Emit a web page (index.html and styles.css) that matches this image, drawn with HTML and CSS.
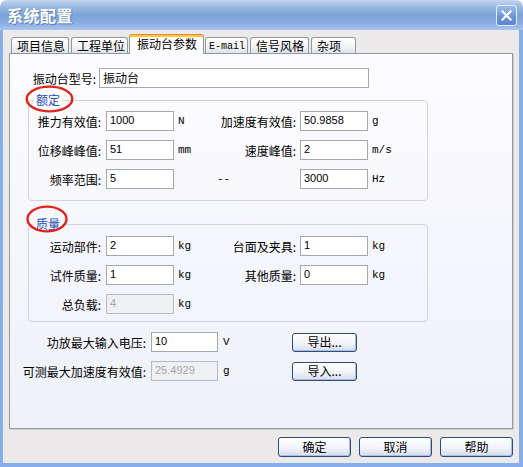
FILE: index.html
```html
<!DOCTYPE html>
<html lang="zh-CN">
<head>
    <meta charset="UTF-8">
    <title>系统配置</title>
    <link rel="stylesheet" href="styles.css">
</head>
<body>
    <div class="window">
        <div class="titlebar">
            <span class="title">系统配置</span>
            <span class="close-btn">
                <svg width="11" height="11" viewBox="0 0 11 11"><path d="M1.5 1.5L9.5 9.5M9.5 1.5L1.5 9.5" stroke="#fff" stroke-width="2.2" stroke-linecap="square"/></svg>
            </span>
        </div>
        <div class="dialog">
            <div class="tabs">
                <div class="tab">项目信息</div>
                <div class="tab">工程单位</div>
                <div class="tab active">振动台参数</div>
                <div class="tab mono">E-mail</div>
                <div class="tab">信号风格</div>
                <div class="tab">杂项</div>
            </div>
            <div class="panel">
                <div class="model-row">
                    <label class="model-label">振动台型号:</label>
                    <input class="field model-field" value="振动台">
                </div>

                <fieldset class="group group-rated">
                    <legend>额定<svg class="mark" width="49" height="28" viewBox="0 0 49 28"><ellipse cx="24.5" cy="14" rx="22.8" ry="12.4" fill="none" stroke="#e3231b" stroke-width="2.4"/></svg></legend>
                    <div class="grid">
                        <label class="lbl">推力有效值:</label>
                        <input class="field" value="1000">
                        <span class="unit">N</span>
                        <label class="lbl lbl2">加速度有效值:</label>
                        <input class="field" value="50.9858">
                        <span class="unit">g</span>

                        <label class="lbl">位移峰峰值:</label>
                        <input class="field" value="51">
                        <span class="unit">mm</span>
                        <label class="lbl lbl2">速度峰值:</label>
                        <input class="field" value="2">
                        <span class="unit">m/s</span>

                        <label class="lbl">频率范围:</label>
                        <input class="field" value="5">
                        <span class="unit"></span>
                        <span class="dash">--</span>
                        <input class="field" value="3000">
                        <span class="unit">Hz</span>
                    </div>
                </fieldset>

                <fieldset class="group group-mass">
                    <legend>质量<svg class="mark" width="42" height="28" viewBox="0 0 42 28"><ellipse cx="21" cy="14" rx="19.5" ry="12.4" fill="none" stroke="#e3231b" stroke-width="2.4"/></svg></legend>
                    <div class="grid">
                        <label class="lbl">运动部件:</label>
                        <input class="field" value="2">
                        <span class="unit">kg</span>
                        <label class="lbl lbl2">台面及夹具:</label>
                        <input class="field" value="1">
                        <span class="unit">kg</span>

                        <label class="lbl">试件质量:</label>
                        <input class="field" value="1">
                        <span class="unit">kg</span>
                        <label class="lbl lbl2">其他质量:</label>
                        <input class="field" value="0">
                        <span class="unit">kg</span>

                        <label class="lbl">总负载:</label>
                        <input class="field" value="4" disabled>
                        <span class="unit">kg</span>
                    </div>
                </fieldset>

                <div class="extra">
                    <label class="lbl">功放最大输入电压:</label>
                    <input class="field" value="10">
                    <span class="unit">V</span>
                    <button class="btn small">导出...</button>

                    <label class="lbl">可测最大加速度有效值:</label>
                    <input class="field" value="25.4929" disabled>
                    <span class="unit">g</span>
                    <button class="btn small">导入...</button>
                </div>
            </div>
            <div class="actions">
                <button class="btn">确定</button>
                <button class="btn">取消</button>
                <button class="btn">帮助</button>
            </div>
        </div>
    </div>
</body>
</html>
```

FILE: styles.css
```css
html, body {
    margin: 0;
    padding: 0;
    background: #ffffff;
}
body {
    font-family: "Noto Sans CJK SC", "Liberation Sans", sans-serif;
    font-size: 12px;
    color: #000;
}
.window {
    width: 523px;
    height: 467px;
    display: flex;
    flex-direction: column;
}
.titlebar {
    height: 30px;
    box-sizing: border-box;
    display: flex;
    align-items: center;
    justify-content: space-between;
    padding: 0 6px 0 7px;
    border-radius: 7px 7px 0 0;
    background: linear-gradient(to bottom, #c4d5ee 0%, #98b7e2 25%, #7ca3d8 50%, #86abe0 75%, #a8c5ee 100%);
}
.title {
    color: #fff;
    font-size: 16px;
    font-weight: bold;
    letter-spacing: 0.5px;
    text-shadow: 1px 1px 0 #5d7fb4;
}
.close-btn {
    width: 21px;
    height: 21px;
    box-sizing: border-box;
    display: flex;
    align-items: center;
    justify-content: center;
    border: 1px solid #e6eefa;
    border-radius: 3px;
    background: linear-gradient(to bottom, #9dbcec, #6792da 60%, #5a88d4);
}
.dialog {
    flex: 1;
    box-sizing: border-box;
    padding: 4px 6px 0 6px;
    background: #ece9ea;
    border-left: 3px solid #85aeea;
    border-right: 4px solid #85aeea;
    border-bottom: 4px solid #85aeea;
}

/* tabs */
.tabs {
    height: 19px;
    display: flex;
    align-items: flex-end;
}
.tab {
    height: 16px;
    box-sizing: border-box;
    margin-left: 2px;
    padding: 1px 0 0 5px;
    line-height: 14px;
    border: 1px solid #919b9c;
    border-bottom: none;
    border-radius: 3px 3px 0 0;
    background: linear-gradient(to bottom, #ffffff, #f4f4f6 55%, #dde2ec);
    white-space: nowrap;
}
.tab:nth-child(1) { width: 58px; }
.tab:nth-child(2) { width: 57px; }
.tab:nth-child(3) { width: 75px; margin-left: 1px; }
.tab:nth-child(4) { width: 43px; margin-left: 1px; }
.tab:nth-child(5) { width: 59px; }
.tab:nth-child(6) { width: 45px; }
.tab.mono {
    font-family: "Liberation Mono", monospace;
    font-size: 10px;
    padding-left: 3px;
    padding-top: 2px;
}
.tab.active {
    height: 20px;
    margin-bottom: -1px;
    position: relative;
    z-index: 1;
    padding: 2px 0 0 7px;
    border-top: 1px solid #e68b2c;
    box-shadow: inset 0 2px 0 #ffc73c;
    background: #fcfcfe;
}

/* panel */
.panel {
    height: 376px;
    box-sizing: border-box;
    padding-top: 14px;
    border: 1px solid #919b9c;
    box-shadow: 1px 1px 0 #cfd2da;
    background: linear-gradient(to bottom, #fcfcfe, #eff1f9);
}
.model-row {
    display: flex;
    align-items: center;
    height: 20px;
}
.model-label {
    width: 89px;
    box-sizing: border-box;
    padding-right: 3px;
    text-align: right;
}
.field {
    width: 68px;
    height: 20px;
    box-sizing: border-box;
    margin: 0;
    padding: 0 0 2px 3px;
    border: 1px solid #a3a8b0;
    background: #fff;
    font-family: "Liberation Sans", "Noto Sans CJK SC", sans-serif;
    font-size: 11px;
    color: #000;
    outline: none;
}
.field:disabled {
    background: #eff0f3;
    border-color: #b8bcc2;
    color: #a6a6a6;
}
.model-field {
    width: 270px;
    font-family: "Noto Sans CJK SC", sans-serif;
    font-size: 12px;
}

/* group boxes */
.group {
    width: 400px;
    box-sizing: border-box;
    margin: 5px 0 0 18px;
    padding: 4px 0 11px 0;
    border: 1px solid #d3d4d8;
    border-radius: 4px;
}
.group-mass {
    margin-top: 16px;
    padding: 5px 0 7px 0;
}
.group legend {
    position: relative;
    margin-left: 5px;
    padding: 0 2px;
    line-height: 14px;
    color: #1f50b8;
}
.mark {
    position: absolute;
    display: block;
}
.group-rated .mark {
    left: -9px;
    top: -8px;
}
.group-mass .mark {
    left: -8px;
    top: -12px;
}
.grid {
    display: grid;
    grid-template-columns: 77px 68px 43px 83px 68px auto;
    grid-auto-rows: 20px;
    row-gap: 9px;
    align-items: center;
}
.lbl {
    text-align: right;
    padding-right: 5px;
    white-space: nowrap;
}
.lbl2 {
    padding-right: 4px;
}
.dash {
    font-family: "Liberation Mono", monospace;
    font-size: 11px;
}
.unit {
    padding-left: 4px;
    font-family: "Liberation Mono", monospace;
    font-size: 11px;
}

/* bottom rows */
.extra {
    display: grid;
    grid-template-columns: 141px 67px 74px auto;
    grid-auto-rows: 20px;
    row-gap: 9px;
    align-items: center;
    margin-top: 10px;
}
.extra .field {
    width: 67px;
}
.extra .unit {
    padding-left: 5px;
}

/* buttons */
.btn {
    width: 73px;
    height: 20px;
    box-sizing: border-box;
    padding: 0;
    border: 1px solid #2f4b7c;
    border-radius: 3px;
    background: linear-gradient(to bottom, #ffffff, #f1f3f8 55%, #d5dded);
    box-shadow: inset -1px -1px 0 #a9bee0;
    font-family: "Noto Sans CJK SC", sans-serif;
    font-size: 12px;
    color: #000;
    line-height: 16px;
}
.btn.small {
    width: 65px;
    height: 19px;
}
.actions {
    display: flex;
    justify-content: flex-end;
    gap: 8px;
    margin-top: 8px;
}
```
